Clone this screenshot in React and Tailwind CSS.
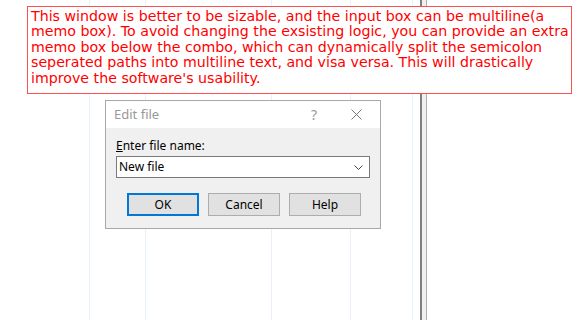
import React from "react";

export default function App() {
  const lines = [89, 145, 271, 350, 412];
  return (
    <div className="relative w-[583px] h-[320px] bg-white overflow-hidden" style={{ fontFamily: "'Noto Sans', sans-serif" }}>
      {lines.map((x) => (
        <div key={x} className="absolute top-0 h-full w-px bg-[#e8f0fa]" style={{ left: x }} />
      ))}
      <div className="absolute top-0 left-[420px] h-full w-[7px] flex">
        <div className="w-[2px] h-full bg-[#808080]" />
        <div className="flex-1 h-full bg-[#f0f0f0]" />
        <div className="w-px h-full bg-[#b0b0b0]" />
      </div>

      <div className="absolute left-[27px] top-[6px] w-[545px] h-[88px] border border-[#ff5050] bg-white pl-[3px] pr-[2px] pt-[2px] text-[14.2px] leading-[15.4px] text-[#ff0000]" style={{ fontFamily: "'DejaVu Sans', sans-serif" }}>
        This window is better to be sizable, and the input box can be multiline(a memo box). To avoid changing the exsisting logic, you can provide an extra memo box below the combo, which can dynamically split the semicolon seperated paths into multiline text, and visa versa. This will drastically improve the software's usability.
      </div>

      <div className="absolute left-[105px] top-[100px] w-[276px] h-[129px] border border-[#a8a8a8] bg-[#f0f0f0] flex flex-col text-[12px] text-black">
        <div className="h-[27px] bg-white flex items-center pl-[8px] pr-[14px]">
          <span className="text-[13px] text-[#999999] flex-1">Edit file</span>
          <span className="text-[14px] text-[#999999] mr-[34px]">?</span>
          <svg width="11" height="11" viewBox="0 0 11 11" className="mr-[4px]">
            <path d="M0.5 0.5 L10.5 10.5 M10.5 0.5 L0.5 10.5" stroke="#777" strokeWidth="1" />
          </svg>
        </div>
        <div className="flex flex-col px-[10px] pt-[10px]">
          <div className="leading-[16px]"><span className="underline">E</span>nter file name:</div>
          <div className="mt-[2px] h-[22px] border border-[#7a7a7a] bg-white flex items-center pl-[2px] pr-[6px]">
            <span className="flex-1">New file</span>
            <svg width="9" height="5" viewBox="0 0 9 5">
              <path d="M0.5 0.5 L4.5 4.5 L8.5 0.5" stroke="#444" strokeWidth="1" fill="none" />
            </svg>
          </div>
          <div className="mt-[15px] flex gap-[9px] pl-[11px]">
            <button className="w-[72px] h-[23px] border-2 border-[#0078d7] bg-[#e1e1e1] flex items-center justify-center">OK</button>
            <button className="w-[72px] h-[23px] border border-[#adadad] bg-[#e1e1e1] flex items-center justify-center">Cancel</button>
            <button className="w-[72px] h-[23px] border border-[#adadad] bg-[#e1e1e1] flex items-center justify-center">Help</button>
          </div>
        </div>
      </div>
    </div>
  );
}
